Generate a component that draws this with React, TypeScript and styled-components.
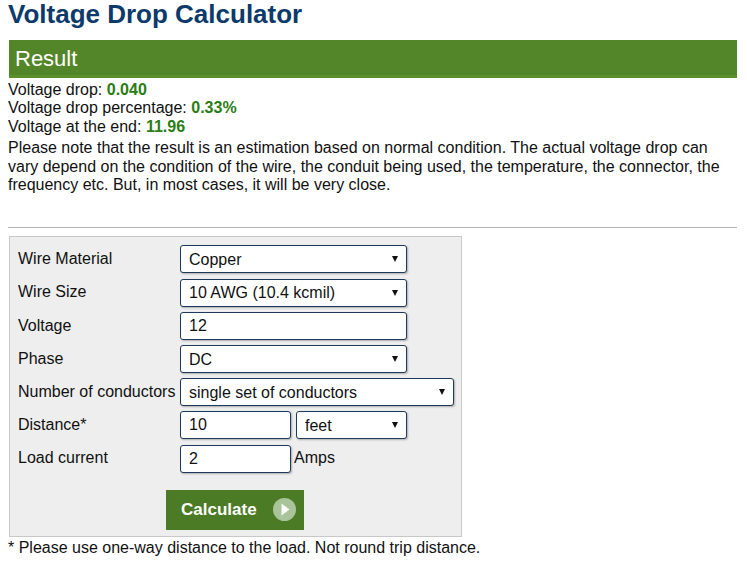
import React, { useState } from 'react';
import styled, { createGlobalStyle } from 'styled-components';

const GlobalStyle = createGlobalStyle`
  html, body {
    margin: 0;
    padding: 0;
    background: #fff;
    font-family: "Liberation Sans", Arial, sans-serif;
    color: #111;
  }
`;

const Page = styled.div`
  width: 729px;
  padding: 0 0 0 8px;
  font-size: 16px;
  line-height: 18.4px;
`;

const Title = styled.h1`
  margin: 0;
  font-size: 26px;
  line-height: 28px;
  font-weight: bold;
  color: #0b3a6b;
`;

const ResultBar = styled.div`
  margin: 12px 0 0 1px;
  height: 38px;
  background: #538628;
  color: #fff;
  font-size: 22px;
  line-height: 38px;
  padding-left: 6px;
  box-shadow: inset 0 -3px 0 #5a8f2c;
`;

const ResultLines = styled.div`
  margin-top: 3px;
`;

const Value = styled.b`
  color: #2a7d14;
`;

const Note = styled.p`
  margin: 3px 0 0;
`;

const Divider = styled.hr`
  margin: 33px 0 0;
  border: none;
  border-top: 1px solid #b5b5b5;
  height: 0;
`;

const FormBox = styled.form`
  margin: 8px 0 0 1px;
  border: 1px solid #c8c8c8;
  background: #eeeeee;
  padding: 8px 0 6px 8px;
  width: 443px;
`;

const Grid = styled.div`
  display: grid;
  grid-template-columns: 162px auto;
  row-gap: 5.2px;
  align-items: center;
`;

const Label = styled.label`
  white-space: nowrap;
`;

const Cell = styled.div`
  display: flex;
  align-items: center;
  gap: 5px;
`;

const control = `
  height: 28px;
  box-sizing: border-box;
  border: 1px solid #1d3a5c;
  border-radius: 3px;
  background: #fff;
  font-family: "Liberation Sans", Arial, sans-serif;
  font-size: 16px;
  color: #111;
  padding: 0 8px;
  box-shadow: 1px 1px 2px rgba(0, 0, 0, 0.28);
  outline: none;
`;

const TextInput = styled.input<{ $w: number }>`
  ${control}
  width: ${({ $w }) => $w}px;
`;

const SelectWrap = styled.div<{ $w: number }>`
  position: relative;
  width: ${({ $w }) => $w}px;

  &::after {
    content: '';
    position: absolute;
    right: 9px;
    top: 11px;
    border-left: 3.5px solid transparent;
    border-right: 3.5px solid transparent;
    border-top: 6px solid #111;
    pointer-events: none;
  }
`;

const Select = styled.select`
  ${control}
  width: 100%;
  appearance: none;
  -webkit-appearance: none;
`;

const Unit = styled.span`
  margin-left: -2px;
`;

const ButtonRow = styled.div`
  display: flex;
  padding: 17px 0 0 148px;
`;

const CalcButton = styled.button`
  display: flex;
  align-items: center;
  gap: 16px;
  height: 40px;
  width: 138px;
  padding: 0 0 0 15px;
  border: none;
  background: #4b7b24;
  color: #fff;
  font-family: "Liberation Sans", Arial, sans-serif;
  font-size: 17px;
  font-weight: bold;
  cursor: pointer;
`;

const Footnote = styled.div`
  margin-top: 2px;
`;

function PlayIcon() {
  return (
    <svg width="23" height="23" viewBox="0 0 23 23">
      <circle cx="11.5" cy="11.5" r="11.5" fill="#a9c49a" />
      <path d="M8.5 5.5 L16.5 11.5 L8.5 17.5 Z" fill="#fff" />
    </svg>
  );
}

export default function App() {
  const [voltage, setVoltage] = useState('12');
  const [distance, setDistance] = useState('10');
  const [current, setCurrent] = useState('2');

  return (
    <Page>
      <GlobalStyle />
      <Title>Voltage Drop Calculator</Title>
      <ResultBar>Result</ResultBar>
      <ResultLines>
        Voltage drop: <Value>0.040</Value>
        <br />
        Voltage drop percentage: <Value>0.33%</Value>
        <br />
        Voltage at the end: <Value>11.96</Value>
      </ResultLines>
      <Note>
        Please note that the result is an estimation based on normal condition. The actual voltage drop can
        vary depend on the condition of the wire, the conduit being used, the temperature, the connector, the
        frequency etc. But, in most cases, it will be very close.
      </Note>
      <Divider />

      <FormBox onSubmit={(e) => e.preventDefault()}>
        <Grid>
          <Label>Wire Material</Label>
          <Cell>
            <SelectWrap $w={227}>
              <Select defaultValue="copper">
                <option value="copper">Copper</option>
                <option value="aluminum">Aluminum</option>
              </Select>
            </SelectWrap>
          </Cell>

          <Label>Wire Size</Label>
          <Cell>
            <SelectWrap $w={227}>
              <Select defaultValue="10">
                <option value="10">10 AWG (10.4 kcmil)</option>
              </Select>
            </SelectWrap>
          </Cell>

          <Label>Voltage</Label>
          <Cell>
            <TextInput $w={227} value={voltage} onChange={(e) => setVoltage(e.target.value)} />
          </Cell>

          <Label>Phase</Label>
          <Cell>
            <SelectWrap $w={227}>
              <Select defaultValue="dc">
                <option value="dc">DC</option>
                <option value="ac1">AC Single phase</option>
                <option value="ac3">AC Three phase</option>
              </Select>
            </SelectWrap>
          </Cell>

          <Label>Number of conductors</Label>
          <Cell>
            <SelectWrap $w={274}>
              <Select defaultValue="1">
                <option value="1">single set of conductors</option>
              </Select>
            </SelectWrap>
          </Cell>

          <Label>Distance*</Label>
          <Cell>
            <TextInput $w={111} value={distance} onChange={(e) => setDistance(e.target.value)} />
            <SelectWrap $w={111}>
              <Select defaultValue="feet">
                <option value="feet">feet</option>
                <option value="meters">meters</option>
              </Select>
            </SelectWrap>
          </Cell>

          <Label>Load current</Label>
          <Cell>
            <TextInput $w={111} value={current} onChange={(e) => setCurrent(e.target.value)} />
            <Unit>Amps</Unit>
          </Cell>
        </Grid>

        <ButtonRow>
          <CalcButton type="submit">
            Calculate
            <PlayIcon />
          </CalcButton>
        </ButtonRow>
      </FormBox>
      <Footnote>* Please use one-way distance to the load. Not round trip distance.</Footnote>
    </Page>
  );
}
